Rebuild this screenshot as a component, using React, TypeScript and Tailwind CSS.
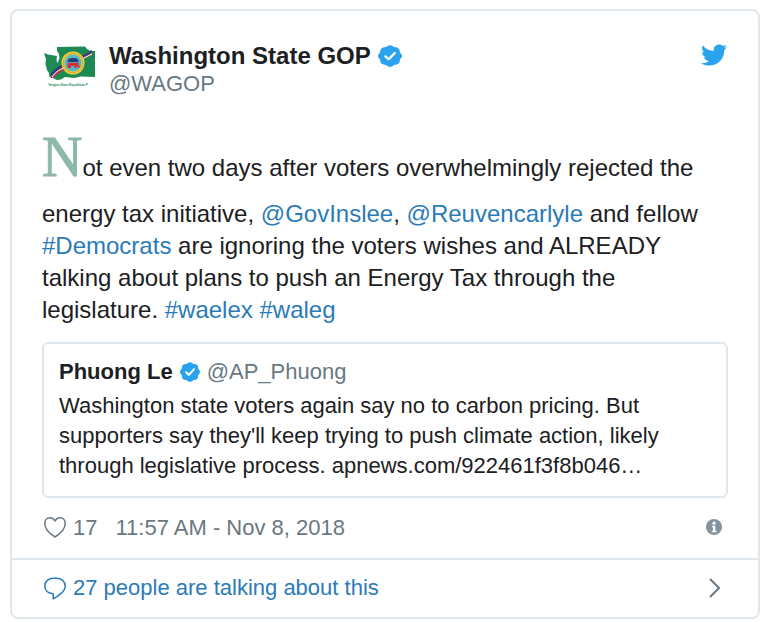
import React, { ReactNode } from 'react'
import { FaTwitter } from 'react-icons/fa'

const VerifiedBadge = ({ className }: { className?: string }) => (
  <svg viewBox="1.75 1.5 20.5 21" preserveAspectRatio="none" className={className} role="img" aria-label="Verified account">
    <path
      fill="#2aa3ef"
      d="M22.25 12c0-1.43-.88-2.67-2.19-3.34.46-1.39.2-2.9-.81-3.91s-2.52-1.27-3.91-.81c-.66-1.31-1.91-2.19-3.34-2.19s-2.67.88-3.33 2.19c-1.4-.46-2.91-.2-3.92.81s-1.26 2.52-.8 3.91c-1.31.67-2.2 1.91-2.2 3.34s.89 2.67 2.2 3.34c-.46 1.39-.21 2.9.8 3.91s2.52 1.26 3.91.81c.67 1.31 1.91 2.19 3.34 2.19s2.68-.88 3.34-2.19c1.39.45 2.9.2 3.91-.81s1.27-2.52.81-3.91c1.31-.67 2.19-1.91 2.19-3.34z"
    />
    <circle cx="12" cy="12" r="9.2" fill="#2aa3ef" />
    <path d="M8 12.300l2.900 2.800 5.200-6" fill="none" stroke="#fff" strokeWidth="2" strokeLinecap="round" strokeLinejoin="round" />
  </svg>
)

const HeartIcon = () => (
  <svg viewBox="0 0 24 24" className="size-6" fill="none" stroke="#697882" strokeWidth="1.5" strokeLinejoin="round" aria-hidden="true">
    <path d="M13 22C8 18.800 2.800 14 2.800 8.400 2.800 5 5 2.700 7.900 2.700c2.200 0 4 1.200 5.100 3.300 1.100-2.100 2.900-3.300 5.100-3.300 2.900 0 5.100 2.300 5.100 5.700C23.200 14 18 18.800 13 22z" />
  </svg>
)

const BubbleIcon = () => (
  <svg viewBox="0 0 24 24" className="size-6" fill="none" stroke="#2b7bb9" strokeWidth="1.5" strokeLinejoin="round" aria-hidden="true">
    <path d="M11.200 17.800C6 17.500 2.800 14.300 2.800 10.100 2.800 5.400 6.600 2.300 11.400 2.300h3.200c4.800 0 8.600 3.100 8.600 7.800 0 3-1.500 5.200-4 7.300-2.200 1.800-5 3.900-8 5.400z" />
  </svg>
)

const InfoIcon = () => (
  <svg viewBox="0 0 16 16" className="size-4" aria-hidden="true">
    <circle cx="8" cy="8" r="8" fill="#8493a0" />
    <circle cx="8" cy="4.200" r="1.600" fill="#fff" />
    <path d="M6 6.800h3.300v5h1.100v1.400H5.800v-1.400H7V8.200H6z" fill="#fff" />
  </svg>
)

const ChevronIcon = () => (
  <svg viewBox="0 0 12 20" className="h-5 w-3" fill="none" stroke="#697882" strokeWidth="2" strokeLinecap="round" aria-hidden="true">
    <path d="M1.500 1.500L10 10l-8.500 8.500" />
  </svg>
)

const Avatar = () => (
  <svg viewBox="0 0 54 54" className="size-[54px] shrink-0" role="img" aria-label="Washington State GOP">
    <path
      fill="#1c8a52"
      d="M2 11l4 1.500 9 1.500-.5 3 .5 4 1.500-2 1-3-.5-4-2-3V5l28-.5L45 7l3 2h5v26l-14-.5-7 1.500-9-1-4 2.500-4 .5-4-2-3.500-1L7 31l-2-3-1.500-6L4 17z"
    />
    <path d="M9 36l2-5c5-5 8-7 12-9l3 5c-6 1-10 4-14 9z" fill="#c4374a" />
    <path d="M8 33c4-6 8-8 13-11l2 2c-5 2-9 5-13 10z" fill="#27437d" />
    <path d="M39 15c4-3 7-4 11-7l-1 5c-3 2-6 3-10 5z" fill="#c4374a" />
    <path d="M39 14c4-2 7-3 10-6l1 2c-4 3-7 4-10 6z" fill="#27437d" />
    <path d="M10 35c4-6 9-8 14-10M40 17l10-5" fill="none" stroke="#fff" strokeWidth="1" />
    <circle cx="31" cy="21" r="11.500" fill="#efd23e" />
    <circle cx="31" cy="21" r="9.800" fill="none" stroke="#b49127" strokeWidth=".6" />
    <circle cx="31" cy="21" r="8.500" fill="#55b5cc" />
    <path d="M25.500 20c0-3 2-4 4-4h3c3 0 4 2 4 4z" fill="#263e76" />
    <path d="M25.500 20.800h11.200v2.500l1 .7v1.500h-2.200V24h-.7v2h-2.300v-2h-3.500v2h-3.500z" fill="#d33136" />
    <text x="6" y="44" fill="#278a5a" fontSize="3" fontWeight="700" fontFamily="Liberation Sans, sans-serif">
      'hington State Republican P
    </text>
  </svg>
)

const TweetLink = ({ children }: { children: ReactNode }) => (
  <a href="#" className="text-[#2b7bb9]">
    {children}
  </a>
)

const QuotedTweet = () => (
  <blockquote className="mt-4 rounded-md border-2 border-[#e1e8ed] px-[15px] pt-[13px] pb-[15px] text-[22px] leading-[30px]">
    <div className="flex items-center">
      <span className="font-bold">Phuong Le</span>
      <VerifiedBadge className="mx-[7px] size-5" />
      <span className="text-[#697882]">@AP_Phuong</span>
    </div>
    <p className="mt-1">
      Washington state voters again say no to carbon pricing. But supporters say they'll keep trying to push climate
      action, likely through legislative process. apnews.com/922461f3f8b046…
    </p>
  </blockquote>
)

const App = () => {
  return (
    <main className="bg-white px-[10px] pt-[9px] font-['Helvetica_Neue','Liberation_Sans',Arial,sans-serif] text-[#1c2022]">
      <article className="rounded-lg border-2 border-[#e1e8ed]">
        <div className="px-[30px] pt-[31px]">
          <header className="flex items-start">
            <Avatar />
            <div className="ml-[13px] grow">
              <div className="flex h-7 items-center">
                <span className="text-2xl leading-7 font-bold">Washington State GOP</span>
                <VerifiedBadge className="ml-[7px] h-[22px] w-6" />
              </div>
              <div className="text-[22px] leading-7 text-[#697882]">@WAGOP</div>
            </div>
            <a href="#" aria-label="View on Twitter" className="mr-px">
              <FaTwitter className="size-[26px] text-[#2aa3ef]" />
            </a>
          </header>

          <p className="mt-[18px] text-2xl leading-8">
            <span className="font-['Liberation_Serif',serif] text-[56px] leading-[82px] text-[#8db9aa] [-webkit-text-stroke:1px_#8db9aa]">
              N
            </span>
            ot even two days after voters overwhelmingly rejected the energy tax initiative,{' '}
            <TweetLink>@GovInslee</TweetLink>, <TweetLink>@Reuvencarlyle</TweetLink> and fellow{' '}
            <TweetLink>#Democrats</TweetLink> are ignoring the voters wishes and ALREADY talking about plans to push an
            Energy Tax through the legislature. <TweetLink>#waelex</TweetLink> <TweetLink>#waleg</TweetLink>
          </p>

          <QuotedTweet />

          <div className="flex h-[60px] items-center pb-0.5 text-[22px] text-[#697882]">
            <button type="button" aria-label="Like" className="flex items-center gap-[7px]">
              <HeartIcon />
              17
            </button>
            <time className="ml-[18px] grow" dateTime="2018-11-08T11:57">
              11:57 AM - Nov 8, 2018
            </time>
            <a href="#" aria-label="Twitter Ads info and privacy" className="mr-1.5">
              <InfoIcon />
            </a>
          </div>
        </div>

        <a
          href="#"
          className="flex h-[59px] items-center border-t-2 border-[#e1e8ed] px-[30px] pb-0.5 text-[22px] text-[#2b7bb9]"
        >
          <BubbleIcon />
          <span className="ml-[7px] grow">27 people are talking about this</span>
          <span className="mr-[7px]">
            <ChevronIcon />
          </span>
        </a>
      </article>
    </main>
  )
}

export default App
